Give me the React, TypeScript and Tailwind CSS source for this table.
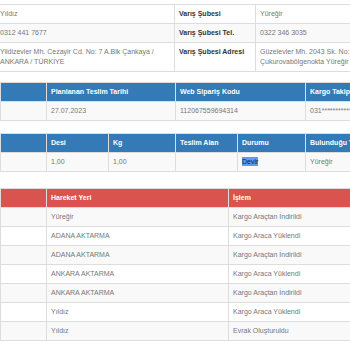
import React from 'react';

const cell = "border border-[#dddddd] px-[4px] py-[4px] align-top";
const th = "border border-[#dddddd] px-[4px] py-[4px] text-left font-bold text-white";

export default function App() {
  const movements = [
    ["Yüreğir", "Kargo Araçtan İndirildi"],
    ["ADANA AKTARMA", "Kargo Araca Yüklendi"],
    ["ADANA AKTARMA", "Kargo Araçtan İndirildi"],
    ["ANKARA AKTARMA", "Kargo Araca Yüklendi"],
    ["ANKARA AKTARMA", "Kargo Araçtan İndirildi"],
    ["Yıldız", "Kargo Araca Yüklendi"],
    ["Yıldız", "Evrak Oluşturuldu"],
  ];

  return (
    <div className="w-[350px] h-[350px] overflow-hidden bg-white font-['Liberation_Sans',Arial,sans-serif] text-[7px] leading-[10px] text-[#777777]">
      <div className="w-[440px]">
        {/* Sender / branch info */}
        <table className="table-fixed border-collapse w-[445px] -ml-[5px] mt-[4px] mb-[10px]">
          <colgroup>
            <col className="w-[179px]" />
            <col className="w-[81px]" />
            <col className="w-[185px]" />
          </colgroup>
          <tbody>
            <tr>
              <td className={cell}>Yıldız</td>
              <td className={`${cell} font-bold text-[#333333]`}>Varış Şubesi</td>
              <td className={cell}>Yüreğir</td>
            </tr>
            <tr className="bg-[#f9f9f9]">
              <td className={cell}>0312 441 7677</td>
              <td className={`${cell} font-bold text-[#333333]`}>Varış Şubesi Tel.</td>
              <td className={cell}>0322 346 3035</td>
            </tr>
            <tr>
              <td className={cell}>Yildizevler Mh. Cezayir Cd. No: 7 A.Blk Çankaya / ANKARA / TÜRKİYE</td>
              <td className={`${cell} font-bold text-[#333333]`}>Varış Şubesi Adresi</td>
              <td className={`${cell} whitespace-nowrap`}>
                Güzelevler Mh. 2043 Sk. No: 1<br />
                Çukurovabölgenokta Yüreğir / ADANA
              </td>
            </tr>
          </tbody>
        </table>

        {/* Delivery */}
        <table className="table-fixed border-collapse w-[440px] mb-[12px]">
          <colgroup>
            <col className="w-[46px]" />
            <col className="w-[129px]" />
            <col className="w-[130px]" />
            <col className="w-[135px]" />
          </colgroup>
          <thead>
            <tr className="bg-[#337ab7]">
              <th className={th}></th>
              <th className={th}>Planlanan Teslim Tarihi</th>
              <th className={th}>Web Sipariş Kodu</th>
              <th className={th}>Kargo Takip No</th>
            </tr>
          </thead>
          <tbody>
            <tr className="bg-[#f9f9f9]">
              <td className={cell}></td>
              <td className={cell}>27.07.2023</td>
              <td className={cell}>112067559694314</td>
              <td className={cell}>031***********</td>
            </tr>
          </tbody>
        </table>

        {/* Package */}
        <table className="table-fixed border-collapse w-[440px] mb-[16px]">
          <colgroup>
            <col className="w-[46px]" />
            <col className="w-[62px]" />
            <col className="w-[67px]" />
            <col className="w-[62px]" />
            <col className="w-[68px]" />
            <col className="w-[135px]" />
          </colgroup>
          <thead>
            <tr className="bg-[#337ab7]">
              <th className={th}></th>
              <th className={th}>Desi</th>
              <th className={th}>Kg</th>
              <th className={th}>Teslim Alan</th>
              <th className={th}>Durumu</th>
              <th className={`${th} whitespace-nowrap`}>Bulunduğu Yer</th>
            </tr>
          </thead>
          <tbody>
            <tr className="bg-[#f9f9f9]">
              <td className={cell}></td>
              <td className={cell}>1,00</td>
              <td className={cell}>1,00</td>
              <td className={cell}></td>
              <td className={cell}>
                <span className="bg-[#5b9bf0] text-[#0d1b3e] py-[1px]">Devir</span>
              </td>
              <td className={cell}>Yüreğir</td>
            </tr>
          </tbody>
        </table>

        {/* Movements */}
        <table className="table-fixed border-collapse w-[440px]">
          <colgroup>
            <col className="w-[46px]" />
            <col className="w-[182px]" />
            <col className="w-[212px]" />
          </colgroup>
          <thead>
            <tr className="bg-[#d9534f]">
              <th className={th}></th>
              <th className={th}>Hareket Yeri</th>
              <th className={th}>İşlem</th>
            </tr>
          </thead>
          <tbody>
            {movements.map((m, i) => (
              <tr key={i} className={i % 2 === 0 ? "bg-[#f9f9f9]" : "bg-white"}>
                <td className={cell}></td>
                <td className={cell}>{m[0]}</td>
                <td className={cell}>{m[1]}</td>
              </tr>
            ))}
          </tbody>
        </table>
      </div>
    </div>
  );
}
